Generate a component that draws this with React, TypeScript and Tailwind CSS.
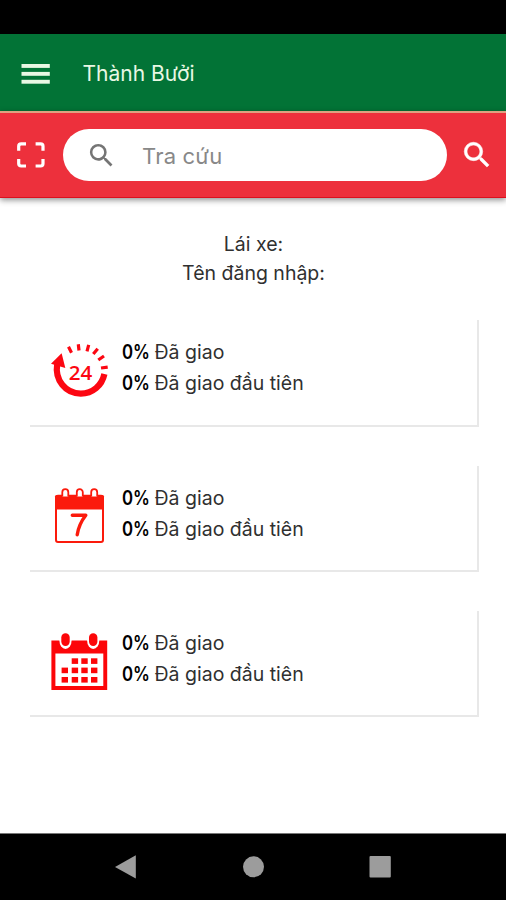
import React from "react";

const SEARCH =
  "M15.5 14h-.79l-.28-.27A6.471 6.471 0 0 0 16 9.5 6.5 6.5 0 1 0 9.5 16c1.61 0 3.09-.59 4.23-1.57l.27.28v.79l5 4.99L20.49 19l-4.99-5zm-6 0C7.01 14 5 11.99 5 9.5S7.01 5 9.5 5 14 7.01 14 9.5 11.99 14 9.5 14z";

function MenuIcon() {
  return (
    <svg className="mt-[2px] ml-[21px] h-5 w-[29px]" viewBox="0 0 29 20" fill="#e9f8e4">
      <rect x="0.5" y="0" width="28.3" height="3.9" />
      <rect x="0.5" y="7.9" width="28.3" height="3.9" />
      <rect x="0.5" y="15.8" width="28.3" height="3.9" />
    </svg>
  );
}

function ScanIcon() {
  return (
    <svg className="ml-[17px] h-[26px] w-7 shrink-0" viewBox="0 0 28 26" fill="none" stroke="#fff" strokeWidth="3.2">
      <path d="M1.7 8.8V4.2Q1.7 1.9 4.2 1.9H9M18.6 1.9h5Q26 1.9 26 4.2V8.8M26 17v4.5Q26 24 23.6 24h-5M9 24H4.2Q1.7 24 1.7 21.5V17" />
    </svg>
  );
}

function DayIcon() {
  return (
    <svg className="h-[56px] w-[58px]" viewBox="0 0 58 56">
      <path d="M6.2 22C3.6 38 14.5 51.6 29.8 51.6C41.5 51.6 51 43.5 53.4 32" fill="none" stroke="#fc0712" strokeWidth="6.2" />
      <path d="M0 21.8 10.6 11.2 14.3 26Z" fill="#fc0712" />
      <path
        d="M17.5 4.8 20.5 10.7M27.3 2.3 28 8.5M37.7 2.8 36 9.3M46.7 6.7 42.3 12M53 14 47.3 18M56.7 25.1 50 26"
        stroke="#fc0712"
        strokeWidth="3.2"
      />
      <text x="29.5" y="38" textAnchor="middle" fontFamily="Open Sans, sans-serif" fontWeight="600" fontSize="20" fill="#fc0712" textLength="23.5" lengthAdjust="spacingAndGlyphs">
        24
      </text>
    </svg>
  );
}

function WeekIcon() {
  return (
    <svg className="h-[56px] w-[58px]" viewBox="0 0 58 56">
      <rect x="5" y="7.8" width="47" height="46.3" rx="2" fill="#fff" stroke="#fb1a0c" strokeWidth="2" />
      <path d="M4 8.5q0-1.5 2-1.5H51q2 0 2 1.5V21.4H4Z" fill="#fb1a0c" />
      {[14.3, 28.8, 43.2].map((x) => (
        <path key={x} d={`M${x - 3} 8.6V4.2a3 3 0 0 1 6 0V8.6`} fill="#fff" stroke="#fb1a0c" strokeWidth="1.8" />
      ))}
      <path d="M21.3 27.3H34.8C30.3 33 27.5 38.5 26.2 46.8" fill="none" stroke="#fb1a0c" strokeWidth="3.4" strokeLinecap="round" strokeLinejoin="round" />
    </svg>
  );
}

const DAYS = [
  [20.7, 25.3], [30.3, 25.3], [40, 25.3],
  [10.6, 34.6], [20.7, 34.6], [30.3, 34.6], [40, 34.6],
  [10.6, 44], [20.7, 44], [30.3, 44], [40, 44],
];

function MonthIcon() {
  return (
    <svg className="h-[58px] w-[58px]" viewBox="0 0 58 58">
      <path d="M.4 7.5H56.2V57H.4ZM4.4 20.6V53H52.3V20.6Z" fill="#fc0609" fillRule="evenodd" />
      {[14.5, 42.2].map((x) => (
        <React.Fragment key={x}>
          <ellipse cx={x} cy="7.5" rx="6.1" ry="8.4" fill="#fff" />
          <rect x={x - 4.2} y="0.2" width="8.4" height="12.8" rx="4.2" fill="#fc0609" />
        </React.Fragment>
      ))}
      {DAYS.map(([x, y]) => (
        <rect key={`${x}-${y}`} x={x} y={y} width="6.4" height="5.6" fill="#fc0609" />
      ))}
    </svg>
  );
}

function StatLine({ label }: { label: string }) {
  return (
    <p className="flex">
      <b className="w-[32.5px] origin-left scale-x-[0.86] font-semibold text-black">0%</b>
      <span>{label}</span>
    </p>
  );
}

function StatCard({ icon, className }: { icon: React.ReactNode; className: string }) {
  return (
    <section className={`mx-[30px] flex w-[449px] shrink-0 border-r-2 border-b-2 border-[#e8e8e8] pl-[21px] ${className}`}>
      <div className="w-[71px] shrink-0 pt-[22px]">{icon}</div>
      <div className="pt-[17px] text-[19.5px] leading-[31px] text-[#303030]">
        <StatLine label="Đã giao" />
        <StatLine label="Đã giao đầu tiên" />
      </div>
    </section>
  );
}

export default function App() {
  return (
    <main className="flex h-[900px] w-[506px] flex-col overflow-hidden bg-white font-['Inter',sans-serif]">
      <div className="h-[34px] shrink-0 bg-black" />
      <header className="flex h-[77px] shrink-0 items-center bg-[#027336]">
        <MenuIcon />
        <h1 className="mt-[2px] ml-[32.5px] text-[21px] text-[#e9f8e4]">Thành Bưởi</h1>
      </header>
      <div className="flex h-[87px] shrink-0 items-center border-t-2 border-b border-t-[#dfa080] border-b-[#dc101e] bg-[#ed303c] shadow-[0_2px_6px_rgba(0,0,0,0.45)]">
        <ScanIcon />
        <div className="ml-[18px] flex h-[52px] w-[384px] shrink-0 items-center rounded-full bg-white">
          <svg className="ml-[23px] h-[31px] w-[31px]" viewBox="0 0 24 24" fill="#757575"><path d={SEARCH} /></svg>
          <span className="mt-[2px] ml-[25px] text-[22px] tracking-[0.2px] text-[#888]">Tra cứu</span>
        </div>
        <svg className="ml-[12.5px] h-[34px] w-[34px] shrink-0" viewBox="0 0 24 24" fill="#fff" stroke="#fff" strokeWidth="0.4"><path d={SEARCH} /></svg>
      </div>
      <div className="mt-[32px] shrink-0 pl-px text-center text-[19.5px] leading-[29px] text-[#303030]">
        <p>Lái xe:</p>
        <p>Tên đăng nhập:</p>
      </div>
      <StatCard className="mt-[32px] h-[107px]" icon={<DayIcon />} />
      <StatCard className="mt-[39px] h-[106px]" icon={<WeekIcon />} />
      <StatCard className="mt-[39px] h-[106px]" icon={<MonthIcon />} />
      <nav className="mt-auto h-[67px] shrink-0 border-t border-[#777] bg-black">
        <svg className="h-[66px] w-[506px]" viewBox="0 1 506 66" fill="#9c9c9c">
          <path d="M115 34 135.8 22.3V45.5Z" />
          <circle cx="253.5" cy="33.8" r="10.5" />
          <rect x="369.5" y="23" width="21.3" height="21.6" rx="1" />
        </svg>
      </nav>
    </main>
  );
}
